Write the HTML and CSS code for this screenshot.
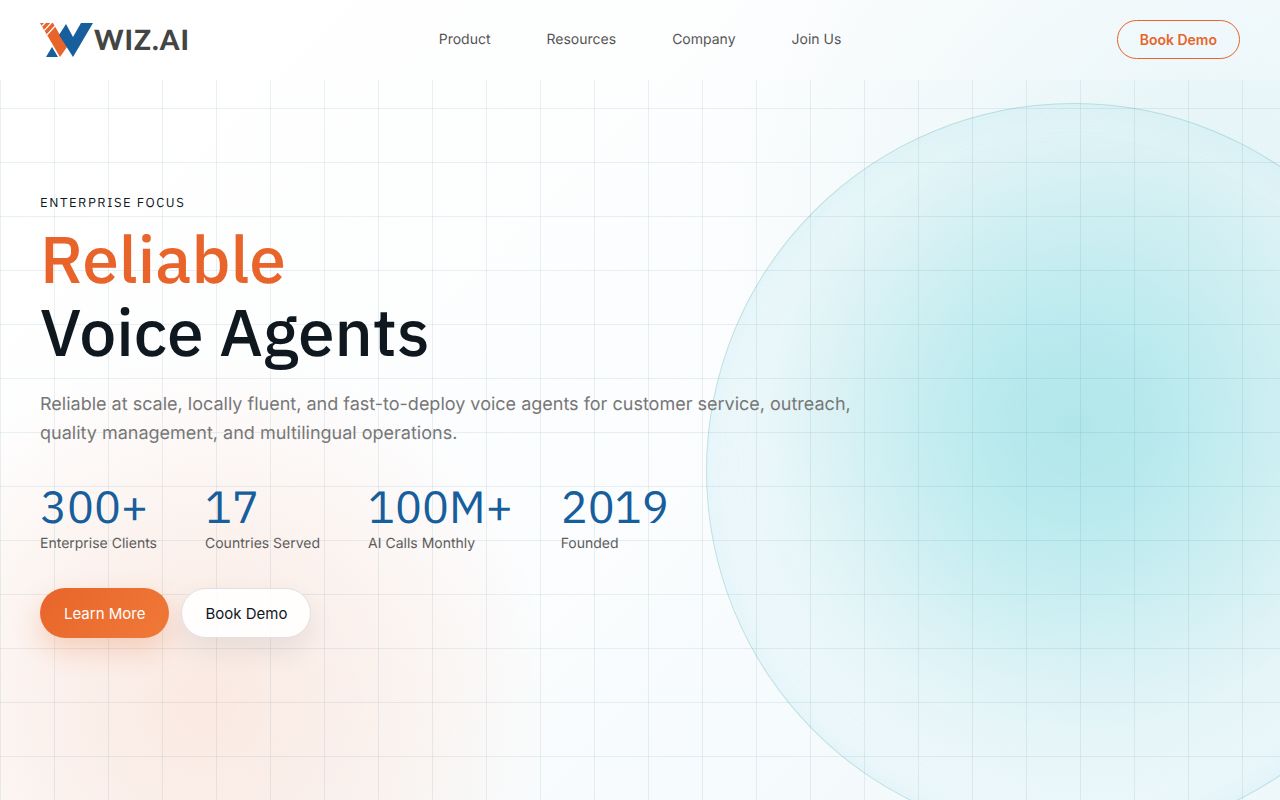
FILE: index.html
```html
<!DOCTYPE html>
<html lang="en">
<head>
    <meta charset="UTF-8">
    <meta name="viewport" content="width=device-width, initial-scale=1.0">
    <title>WIZ.AI - Reliable Voice Agents</title>
    <link rel="stylesheet" href="styles.css">
</head>
<body>
    <div class="backdrop" aria-hidden="true">
        <div class="backdrop-orb"></div>
        <div class="backdrop-grid"></div>
    </div>

    <header class="header">
        <a href="#" class="logo">
            <svg class="logo-mark" viewBox="0 0 54 36" aria-hidden="true">
                <clipPath id="bar"><path d="M0 1H13L27 25 20 35Z"/></clipPath>
                <g clip-path="url(#bar)">
                    <path fill="#e8642a" d="M0 0H28V36H0Z"/>
                    <path fill="none" stroke="#fff" stroke-width="1.3" d="M0 6 6 0M2 11 12 0M5 15 16 3"/>
                </g>
                <path fill="#175e9c" d="M19 13 26 2 33 15 41 1H53L33 35Z"/>
                <path fill="#175e9c" d="M6 35 12 25 18 35Z"/>
            </svg>
            <span class="logo-text">WIZ.AI</span>
        </a>
        <nav class="nav">
            <a href="#">Product</a>
            <a href="#">Resources</a>
            <a href="#">Company</a>
            <a href="#">Join Us</a>
        </nav>
        <button type="button" class="header-btn">Book Demo</button>
    </header>

    <main class="hero">
        <div class="hero-content">
            <p class="eyebrow">Enterprise Focus</p>
            <h1><span class="accent">Reliable</span> Voice Agents</h1>
            <p class="lead">Reliable at scale, locally fluent, and fast-to-deploy voice agents for customer service, outreach, quality management, and multilingual operations.</p>
            <ul class="stats">
                <li><strong>300+</strong><span>Enterprise Clients</span></li>
                <li><strong>17</strong><span>Countries Served</span></li>
                <li><strong>100M+</strong><span>AI Calls Monthly</span></li>
                <li><strong>2019</strong><span>Founded</span></li>
            </ul>
            <div class="actions">
                <button type="button" class="btn btn-primary">Learn More</button>
                <button type="button" class="btn btn-light">Book Demo</button>
            </div>
        </div>
    </main>
</body>
</html>
```
FILE: styles.css
```css
* {
    box-sizing: border-box;
}

body {
    margin: 0;
    min-height: 100vh;
    display: flex;
    flex-direction: column;
    position: relative;
    font-family: 'Inter', sans-serif;
    color: #0f171f;
    text-rendering: geometricPrecision;
}

/* Background layers */
.backdrop {
    position: absolute;
    inset: 0;
    overflow: hidden;
    background:
        radial-gradient(circle at 16% 88%, rgba(235, 110, 50, 0.14), rgba(235, 110, 50, 0.09) 150px, transparent 350px),
        radial-gradient(circle at 92% 26%, rgba(130, 208, 216, 0.18), transparent 480px),
        linear-gradient(135deg, #ffffff 0%, #fcfdfe 50%, #eef8fb 100%);
}

.backdrop-grid {
    position: absolute;
    inset: 80px 0 0;
    background-image:
        linear-gradient(rgba(23, 94, 120, 0.09) 1px, transparent 1px),
        linear-gradient(90deg, rgba(23, 94, 120, 0.09) 1px, transparent 1px);
    background-size: 54px 54px;
    background-position: 0 28px;
}

.backdrop-orb {
    position: absolute;
    top: 103px;
    right: -162px;
    width: 736px;
    height: 736px;
    border: 1px solid rgba(90, 170, 165, 0.32);
    border-radius: 50%;
    background: radial-gradient(circle at 50% 44%, rgba(166, 227, 231, 0.84) 0%, rgba(170, 229, 233, 0.8) 14%, rgba(180, 232, 236, 0.7) 28%, rgba(195, 235, 239, 0.58) 42%, rgba(218, 241, 244, 0.5) 56%, rgba(232, 245, 250, 0.44) 72%);
    box-shadow: inset 0 0 36px rgba(150, 225, 240, 0.22);
}

/* Header */
.header {
    position: relative;
    height: 80px;
    padding: 0 40px 1px;
    display: grid;
    grid-template-columns: 1fr auto 1fr;
    align-items: center;
    background: rgba(255, 255, 255, 0.2);
}

.logo {
    display: flex;
    align-items: center;
    color: #444444;
    text-decoration: none;
}

.logo-mark {
    width: 54px;
    height: 36px;
}

.logo-text {
    padding-bottom: 2px;
    font-family: 'Lato', sans-serif;
    font-size: 28px;
    font-weight: 900;
    line-height: 32px;
    letter-spacing: 1px;
}

.nav {
    display: flex;
    gap: 56px;
}

.nav a {
    color: #555555;
    font-size: 14px;
    line-height: 20px;
    text-decoration: none;
}

.header-btn {
    justify-self: end;
    height: 39px;
    padding: 0 22px;
    border: 1px solid #e8642a;
    border-radius: 20px;
    background: transparent;
    color: #e8642a;
    font-family: inherit;
    font-size: 14px;
    font-weight: 600;
    cursor: pointer;
}

/* Hero */
.hero {
    flex: 1;
    position: relative;
    padding: 113px 40px 40px;
}

.hero-content {
    max-width: 820px;
}

.eyebrow {
    margin: 0 0 10px;
    font-family: 'IBM Plex Sans', 'Noto Sans', sans-serif;
    font-size: 13px;
    line-height: 20px;
    letter-spacing: 0.12em;
    text-transform: uppercase;
}

h1 {
    margin: 0;
    font-family: 'IBM Plex Sans', 'Noto Sans', sans-serif;
    font-size: 66px;
    font-weight: 500;
    line-height: 73px;
}

.accent {
    display: block;
    color: #e8642a;
}

.lead {
    margin: 21px 0 0;
    color: #777777;
    font-size: 18px;
    line-height: 29px;
}

.stats {
    display: flex;
    gap: 48px;
    margin: 33px 0 0;
    padding: 0;
    list-style: none;
}

.stats strong {
    display: block;
    color: #175e9c;
    font-family: 'IBM Plex Sans', 'Noto Sans', sans-serif;
    font-size: 45px;
    font-weight: 400;
    line-height: 52px;
}

.stats span {
    display: block;
    color: #5c5c5c;
    font-size: 14px;
    line-height: 22px;
}

.actions {
    display: flex;
    gap: 12px;
    margin-top: 33px;
}

.btn {
    height: 50px;
    padding: 0 23px;
    border: 1px solid transparent;
    border-radius: 25px;
    font-family: inherit;
    font-size: 15px;
    cursor: pointer;
}

.btn-primary {
    background: linear-gradient(135deg, #e8642a, #f07a38) border-box;
    color: #ffffff;
    box-shadow: 0 12px 28px rgba(232, 100, 42, 0.24);
}

.btn-light {
    border-color: #e0dfe2;
    background: rgba(255, 255, 255, 0.9);
    color: #0f171f;
    box-shadow: 0 12px 28px rgba(15, 23, 31, 0.08);
}
```
